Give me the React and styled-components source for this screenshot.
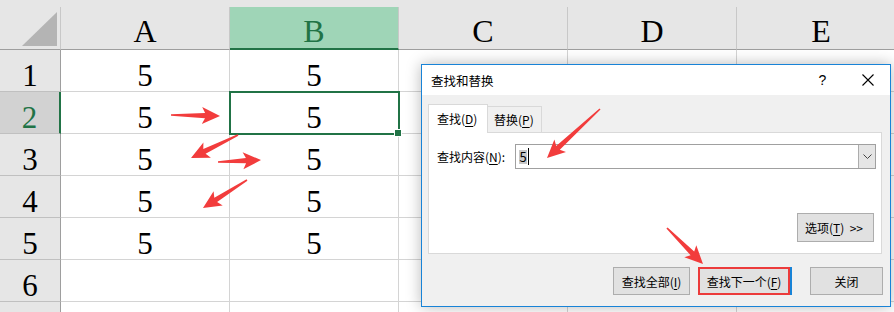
import React from 'react';
import styled, { createGlobalStyle } from 'styled-components';

const GlobalStyle = createGlobalStyle`
  * { box-sizing: border-box; }
  body {
    margin: 0;
    background: #ffffff;
    overflow: hidden;
  }
`;

const COLS = ['A', 'B', 'C', 'D', 'E'];
const ROWS = [1, 2, 3, 4, 5, 6, 7];
const VISIBLE_ROWS = 6;
const VALUES = { 1: '5', 2: '5', 3: '5', 4: '5', 5: '5' };

const Page = styled.div`
  position: relative;
  width: 894px;
  height: 312px;
  overflow: hidden;
  font-family: "Liberation Serif", "DejaVu Serif", serif;
`;

const Sheet = styled.div`
  display: grid;
  grid-template-columns: 61px repeat(5, 169px);
  grid-template-rows: 7px 43px repeat(7, 42px);
`;

const TopStrip = styled.div`
  grid-column: 1 / -1;
  background: #e6e6e6;
`;

const Corner = styled.div`
  position: relative;
  background: #e6e6e6;
  border-right: 1px solid #c8c8c8;
  border-bottom: 1px solid #9e9e9e;
  svg { display: block; }
`;

const ColHeader = styled.div`
  display: flex;
  align-items: flex-end;
  justify-content: center;
  padding-bottom: ${p => (p.$active ? 1 : 2)}px;
  font-size: 32px;
  line-height: 32px;
  background: ${p => (p.$active ? '#9fd5b7' : '#e6e6e6')};
  color: ${p => (p.$active ? '#217346' : '#000')};
  border-right: 1px solid #c8c8c8;
  border-bottom: ${p => (p.$active ? '2px solid #217346' : '1px solid #9e9e9e')};
`;

const RowHeader = styled.div`
  display: flex;
  align-items: flex-end;
  justify-content: center;
  font-size: 31px;
  line-height: 30px;
  background: ${p => (p.$active ? '#d2d2d2' : '#e6e6e6')};
  color: ${p => (p.$active ? '#217346' : '#000')};
  border-right: ${p => (p.$active ? '2px solid #217346' : '1px solid #9e9e9e')};
  border-bottom: 1px solid #c0c0c0;
`;

const Cell = styled.div`
  position: relative;
  display: flex;
  align-items: flex-end;
  justify-content: center;
  font-size: 31px;
  line-height: 30px;
  border-right: 1px solid #d4d4d4;
  border-bottom: 1px solid #d4d4d4;
  ${p => p.$selected && `
    outline: 2px solid #217346;
    outline-offset: -1px;
    z-index: 1;
    &::after {
      content: '';
      position: absolute;
      right: -4px;
      bottom: -4px;
      width: 6px;
      height: 6px;
      background: #217346;
      border: 1px solid #fff;
    }
  `}
`;

const Dialog = styled.div`
  position: absolute;
  left: 421px;
  top: 64px;
  width: 470px;
  height: 243px;
  display: flex;
  flex-direction: column;
  border: 1px solid #1883d7;
  background: #f0f0f0;
  box-shadow: 0 0 14px rgba(0, 0, 0, 0.28);
  font-family: "Noto Sans CJK SC", "Noto Sans", sans-serif;
  font-size: 12px;
  color: #000;
  z-index: 5;
`;

const TitleBar = styled.div`
  height: 30px;
  display: flex;
  align-items: center;
  padding-left: 9px;
  background: #ffffff;
  font-size: 12.5px;
`;

const Title = styled.div`
  flex: 1;
`;

const TitleButton = styled.div`
  width: 45px;
  height: 30px;
  display: flex;
  align-items: center;
  justify-content: center;
  font-family: "Liberation Sans", sans-serif;
  font-size: 14px;
`;

const Body = styled.div`
  flex: 1;
  display: flex;
  flex-direction: column;
  padding: 9px 8px 0 6px;
`;

const Tabs = styled.div`
  display: flex;
  align-items: flex-end;
  height: 28px;
  position: relative;
  z-index: 1;
`;

const Tab = styled.div`
  height: ${p => (p.$active ? 29 : 27)}px;
  width: ${p => (p.$active ? 60 : 54)}px;
  margin-bottom: -1px;
  display: flex;
  align-items: center;
  padding-left: ${p => (p.$active ? 8 : 6)}px;
  padding-bottom: ${p => (p.$active ? 1 : 0)}px;
  background: ${p => (p.$active ? '#ffffff' : '#f0f0f0')};
  border: 1px solid #d9d9d9;
  border-bottom: ${p => (p.$active ? 'none' : '1px solid #d9d9d9')};
  border-left-width: ${p => (p.$active ? 1 : 0)}px;
`;

const Panel = styled.div`
  height: 122px;
  display: flex;
  flex-direction: column;
  padding: 11px 5px 0 8px;
  background: #ffffff;
  border: 1px solid #d9d9d9;
`;

const FieldRow = styled.div`
  display: flex;
  align-items: center;
`;

const Label = styled.div`
  width: 78px;
`;

const Combo = styled.div`
  flex: 1;
  height: 25px;
  display: flex;
  border: 1px solid #a0a0a0;
  background: #fff;
`;

const ComboText = styled.div`
  flex: 1;
  display: flex;
  align-items: center;
  padding-left: 3px;
  font-size: 13px;
`;

const Selection = styled.span`
  background: #c8c8c8;
  line-height: 14px;
  padding: 0 0.5px;
`;

const Caret = styled.span`
  display: inline-block;
  width: 1px;
  height: 17px;
  background: #000;
  margin-left: 1px;
`;

const ComboArrow = styled.div`
  width: 17px;
  display: flex;
  align-items: center;
  justify-content: center;
  background: #e5e5e5;
  border-left: 1px solid #acacac;
`;

const OptionsRow = styled.div`
  margin-top: auto;
  margin-bottom: 11px;
  display: flex;
  justify-content: flex-end;
  padding-right: 2px;
`;

const Button = styled.div`
  width: ${p => p.$w}px;
  height: ${p => p.$h || 28}px;
  display: flex;
  align-items: center;
  justify-content: ${p => (p.$left ? 'flex-start' : 'center')};
  padding-left: ${p => (p.$left ? 7 : 0)}px;
  background: #e1e1e1;
  border: 1px solid #adadad;
  white-space: nowrap;
  ${p => p.$marked && `
    border: 2px solid #ec3b3b;
    box-shadow: 2px 0 0 #1883d7;
  `}
`;

const Footer = styled.div`
  display: flex;
  justify-content: flex-end;
  margin-top: 13px;
  margin-right: -1px;
`;

const FooterGap = styled.div`
  width: ${p => p.$w}px;
`;

const Overlay = styled.svg`
  position: absolute;
  left: 0;
  top: 0;
  pointer-events: none;
  z-index: 10;
`;

const U = styled.span`
  text-decoration: underline;
  text-underline-offset: 2px;
`;

function arrowPoints([x1, y1], [x2, y2]) {
  const dx = x2 - x1;
  const dy = y2 - y1;
  const len = Math.hypot(dx, dy);
  const ux = dx / len;
  const uy = dy / len;
  const nx = -uy;
  const ny = ux;
  const head = 17;
  const bx = x2 - ux * head;
  const by = y2 - uy * head;
  const at = (x, y, a, b) => `${(x + ux * a + nx * b).toFixed(1)},${(y + uy * a + ny * b).toFixed(1)}`;
  return [
    at(x1, y1, 0, 0.8),
    at(bx, by, 2, 2.6),
    at(bx, by, -1, 8.5),
    at(x2, y2, 0, 0),
    at(bx, by, -1, -8.5),
    at(bx, by, 2, -2.6),
    at(x1, y1, 0, -0.8),
  ].join(' ');
}

const ARROWS = [
  [[171, 115], [220, 116]],
  [[238, 135], [191, 158]],
  [[218, 162], [261, 160]],
  [[247, 180], [203, 208]],
  [[600, 109], [547, 158]],
  [[667, 228], [703, 264]],
];

export default function App() {
  return (
    <Page>
      <GlobalStyle />
      <Sheet>
        <TopStrip />
        <Corner>
          <svg width="60" height="42" viewBox="0 0 60 42">
            <polygon points="57,5 57,39 22,39" fill="#b4b4b4" />
          </svg>
        </Corner>
        {COLS.map(c => (
          <ColHeader key={c} $active={c === 'B'}>{c}</ColHeader>
        ))}
        {ROWS.map(r => (
          <React.Fragment key={r}>
            <RowHeader $active={r === 2}>{r <= VISIBLE_ROWS ? r : null}</RowHeader>
            {COLS.map(c => (
              <Cell key={c} $selected={r === 2 && c === 'B'}>
                {(c === 'A' || c === 'B') && VALUES[r]}
              </Cell>
            ))}
          </React.Fragment>
        ))}
      </Sheet>

      <Dialog>
        <TitleBar>
          <Title>查找和替换</Title>
          <TitleButton>?</TitleButton>
          <TitleButton>
            <svg width="12" height="12" viewBox="0 0 12 12">
              <path d="M0.5 0.5 L11.5 11.5 M11.5 0.5 L0.5 11.5" stroke="#000" strokeWidth="1.1" />
            </svg>
          </TitleButton>
        </TitleBar>
        <Body>
          <Tabs>
            <Tab $active>查找(<U>D</U>)</Tab>
            <Tab>替换(<U>P</U>)</Tab>
          </Tabs>
          <Panel>
            <FieldRow>
              <Label>查找内容(<U>N</U>):</Label>
              <Combo>
                <ComboText>
                  <Selection>5</Selection>
                  <Caret />
                </ComboText>
                <ComboArrow>
                  <svg width="9" height="5" viewBox="0 0 9 5">
                    <path d="M0.5 0.5 L4.5 4.5 L8.5 0.5" stroke="#444" strokeWidth="1" fill="none" />
                  </svg>
                </ComboArrow>
              </Combo>
            </FieldRow>
            <OptionsRow>
              <Button $w={77} $h={29} $left>选项(<U>T</U>)&nbsp;&nbsp;&gt;&gt;</Button>
            </OptionsRow>
          </Panel>
          <Footer>
            <Button $w={77}>查找全部(<U>I</U>)</Button>
            <FooterGap $w={8} />
            <Button $w={92} $marked>查找下一个(<U>F</U>)</Button>
            <FooterGap $w={20} />
            <Button $w={73}>关闭</Button>
          </Footer>
        </Body>
      </Dialog>

      <Overlay width="894" height="312" viewBox="0 0 894 312">
        {ARROWS.map(([a, b], i) => (
          <polygon key={i} points={arrowPoints(a, b)} fill="#f23c3c" />
        ))}
      </Overlay>
    </Page>
  );
}
